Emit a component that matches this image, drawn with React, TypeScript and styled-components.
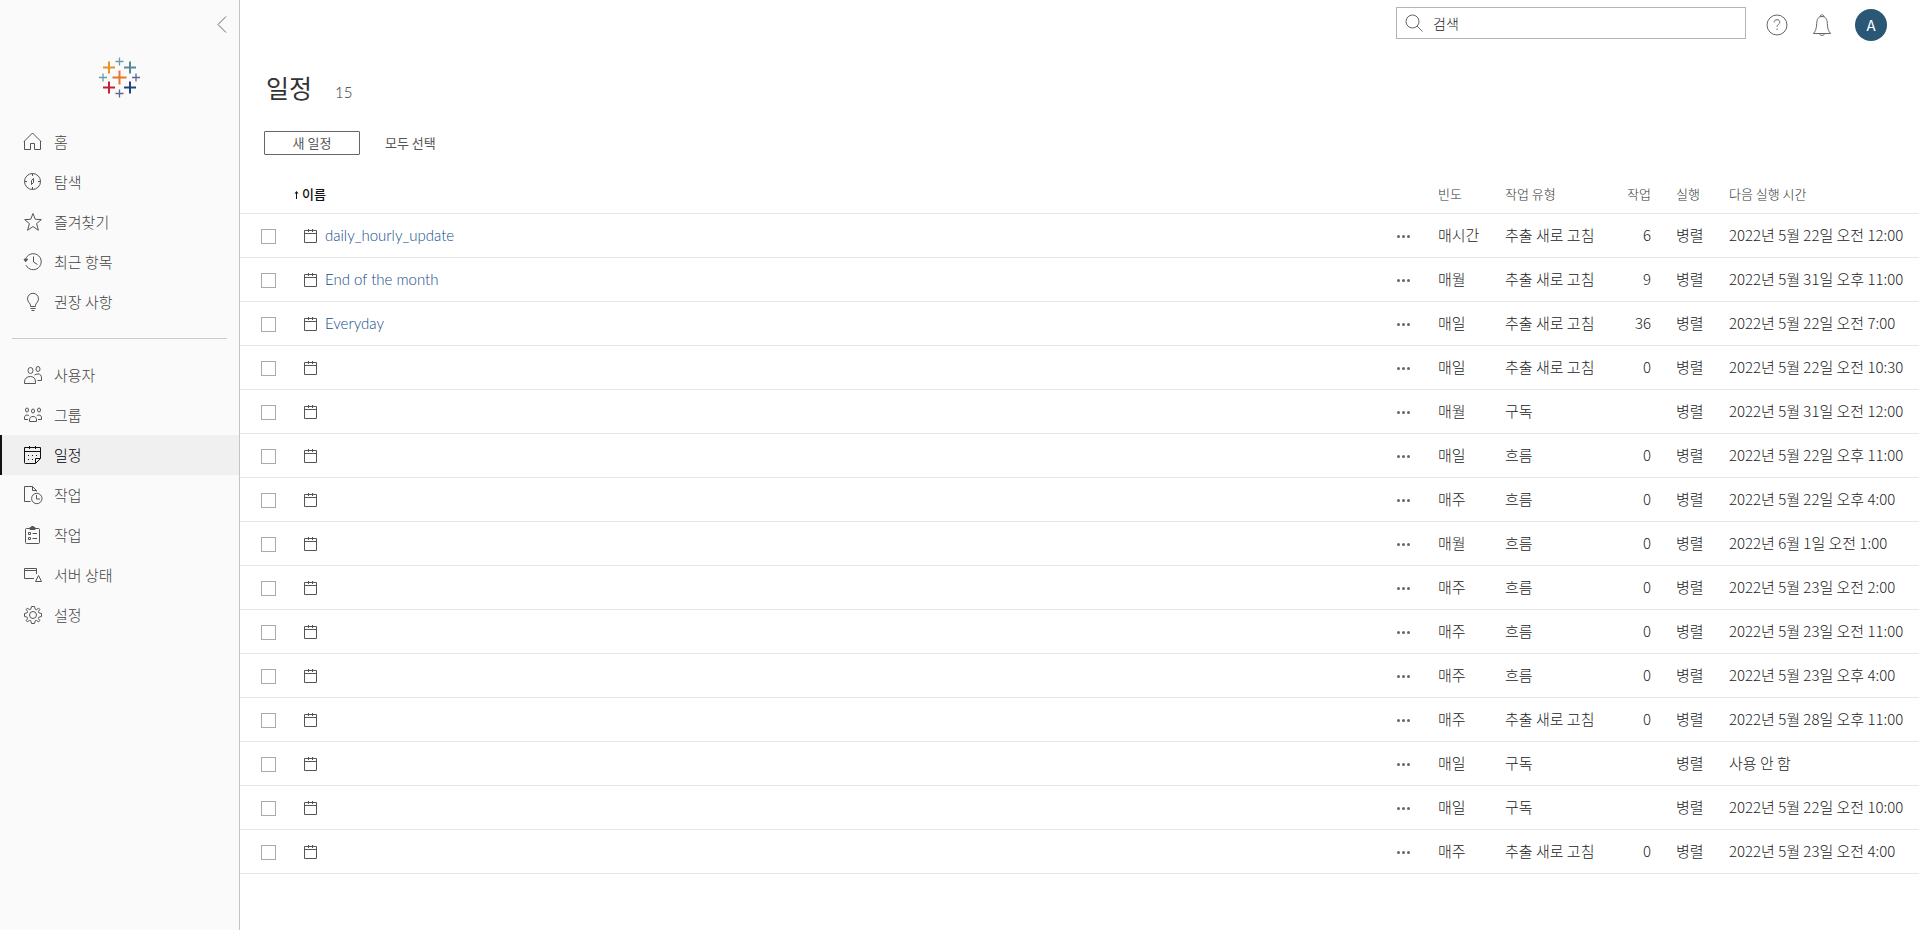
import React from "react";
import styled, { createGlobalStyle } from "styled-components";

const GlobalStyle = createGlobalStyle`
  *, *::before, *::after { box-sizing: border-box; }
  body {
    margin: 0;
    background: #fff;
    color: #222;
    font-family: "Noto Sans CJK KR", sans-serif;
    font-size: 15px;
    line-height: 20px;
  }
  button, input { font: inherit; color: inherit; }
`;

const Page = styled.div`
  display: grid;
  grid-template-columns: 240px minmax(0, 1fr);
  min-height: 100vh;
`;

const Sidebar = styled.aside`
  display: flex;
  flex-direction: column;
  background: #fafafa;
  border-right: 1px solid #c4c4c4;
`;

const SidebarTop = styled.div`
  display: flex;
  justify-content: flex-end;
  padding: 12px 8px 0 0;
`;

const IconButton = styled.button`
  display: grid;
  place-items: center;
  padding: 0;
  border: 0;
  background: none;
  color: #666;
  cursor: pointer;
`;

const CollapseButton = styled(IconButton)`
  width: 18px;
  height: 24px;
`;

const LogoLink = styled.a`
  align-self: center;
  display: block;
  height: 42px;
  margin: 21px 0 23px;
`;

const NavList = styled.ul`
  list-style: none;
  margin: 0;
  padding: 0;
`;

const NavLink = styled.a<{ $active?: boolean }>`
  display: flex;
  align-items: center;
  gap: 11px;
  height: 40px;
  padding-left: 21px;
  border-left: 2px solid ${(p) => (p.$active ? "#111" : "transparent")};
  background: ${(p) => (p.$active ? "#f0f0f0" : "transparent")};
  color: ${(p) => (p.$active ? "#000" : "#444")};
  font-weight: 300;
  font-size: 15px;
  text-decoration: none;
`;

const NavIcon = styled.span<{ $active?: boolean }>`
  display: flex;
  color: ${(p) => (p.$active ? "#111" : "#555")};
`;

const Divider = styled.hr`
  width: auto;
  height: 1px;
  margin: 16px 12px;
  border: 0;
  background: #ccc;
`;

const Main = styled.main`
  display: flex;
  flex-direction: column;
  min-width: 0;
`;

const TopBar = styled.header`
  display: flex;
  align-items: center;
  justify-content: flex-end;
  height: 50px;
  padding-right: 32px;
`;

const SearchBox = styled.label`
  display: flex;
  align-items: center;
  gap: 10px;
  width: 350px;
  height: 32px;
  margin: 0 20px 4px 0;
  padding-left: 8px;
  border: 1px solid #b4b4b4;
  color: #666;
`;

const SearchInput = styled.input`
  flex: 1;
  min-width: 0;
  height: 28px;
  padding: 0;
  border: 0;
  outline: 0;
  background: none;
  font-size: 14px;
  font-weight: 300;
  &::placeholder { color: #222; opacity: 1; }
`;

const TopActions = styled.div`
  display: flex;
  align-items: center;
  gap: 23px;
`;

const BellButton = styled(IconButton)`
  width: 21px;
`;

const Avatar = styled.button`
  width: 32px;
  height: 32px;
  padding: 0;
  border: 0;
  border-radius: 50%;
  background: #2a5775;
  color: #fff;
  font-size: 15px;
  cursor: pointer;
`;

const Heading = styled.div`
  display: flex;
  align-items: baseline;
  gap: 23px;
  padding: 19px 0 0 26px;
`;

const Title = styled.h1`
  margin: 0;
  color: #333;
  font-size: 25px;
  font-weight: 400;
  line-height: 36px;
`;

const Count = styled.span`
  color: #333;
  font-family: Lato, sans-serif;
  font-size: 15px;
  font-weight: 300;
`;

const Actions = styled.div`
  display: flex;
  align-items: center;
  gap: 25px;
  padding: 26px 0 0 24px;
`;

const ActionButton = styled.button<{ $outlined?: boolean }>`
  height: 24px;
  width: ${(p) => (p.$outlined ? "96px" : "auto")};
  padding: 0;
  border: ${(p) => (p.$outlined ? "1px solid #666" : "0")};
  border-radius: 1px;
  background: none;
  color: #555;
  font-size: 13px;
  font-weight: 400;
  line-height: 20px;
  cursor: pointer;
`;

const Table = styled.table`
  width: 100%;
  margin-top: 20px;
  border-collapse: separate;
  border-spacing: 0;
  table-layout: fixed;
`;

const Col = styled.col<{ $width?: number }>`
  width: ${(p) => (p.$width ? `${p.$width}px` : "auto")};
`;

const HeadCell = styled.th<{ $right?: boolean }>`
  height: 39px;
  padding: ${(p) => (p.$right ? "0 11px 0 0" : "0 0 0 14px")};
  border-bottom: 1px solid #e6e6e6;
  color: #333;
  font-size: 13px;
  font-weight: 300;
  text-align: ${(p) => (p.$right ? "right" : "left")};
  white-space: nowrap;
`;

const SortHeadCell = styled(HeadCell)`
  padding-left: 1px;
`;

const SortButton = styled.button`
  display: flex;
  align-items: center;
  gap: 3px;
  padding: 0;
  border: 0;
  background: none;
  color: #111;
  font-weight: 500;
  cursor: pointer;
`;

const Cell = styled.td<{ $right?: boolean }>`
  height: 44px;
  padding: ${(p) => (p.$right ? "0 11px 2px 0" : "0 0 2px 14px")};
  border-bottom: 1px solid #e6e6e6;
  font-weight: 300;
  text-align: ${(p) => (p.$right ? "right" : "left")};
  white-space: nowrap;
`;

const CheckCell = styled(Cell)`
  padding: 0 0 0 21px;
`;

const NameCell = styled(Cell)`
  padding: 0 0 0 11px;
`;

const MenuCell = styled(Cell)`
  padding: 1px 0 0;
`;

const Checkbox = styled.input`
  appearance: none;
  display: block;
  width: 15px;
  height: 15px;
  margin: 2px 0 0;
  border: 1px solid #aaa;
  background: #fff;
  &:checked { background: #2a5775; }
`;

const NameLine = styled.div`
  display: flex;
  align-items: center;
  gap: 8px;
  color: #555;
`;

const NameLink = styled.a`
  padding-bottom: 2px;
  color: #0f4c8c;
  font-family: Lato, sans-serif;
  font-weight: 300;
  text-decoration: none;
`;

const MenuButton = styled(IconButton)`
  width: 39px;
  height: 24px;
`;

type IconProps = { size?: number; h?: number; children: React.ReactNode };

const Icon = ({ size = 20, h, children }: IconProps) => (
  <svg
    width={size}
    height={h ?? size}
    viewBox={`0 0 ${size} ${h ?? size}`}
    fill="none"
    stroke="currentColor"
    strokeWidth="1"
    aria-hidden="true"
  >
    {children}
  </svg>
);

const icons = {
  home: (
    <Icon>
      <path d="M1 9.5L9.5 1L18 9.5M1.5 9V17.5H7.5V11.5H11.5V17.5H17.5V9" />
    </Icon>
  ),
  explore: (
    <Icon>
      <circle cx="9.5" cy="9.5" r="8" />
      <path d="M9.5 1.5V4M9.5 15V17.5M1.5 9.5H4M15 9.5H17.5M8.5 8.5L10.5 6.5V10.5L8.5 12.5Z" />
    </Icon>
  ),
  star: (
    <Icon>
      <path d="M10 1.5L12.3 7.3L18.3 7.6L13.6 11.6L15.4 18.3L10 14.5L4.6 18.3L6.4 11.6L1.7 7.6L7.7 7.3Z" />
    </Icon>
  ),
  recent: (
    <Icon>
      <path d="M2.5 7.5A8 8 0 1 1 3 13.2M10.5 4.5V10L14.5 12.5" />
      <path d="M1 7.2H4.8L2.6 9.8Z" fill="currentColor" />
    </Icon>
  ),
  bulb: (
    <Icon>
      <path d="M7.5 14.5V13.2C7.5 11.5 4.5 10 4.5 6.8A5.5 5.5 0 0 1 15.5 6.8C15.5 10 12.5 11.5 12.5 13.2V14.5ZM7.5 16.5H12.5M8.5 18.5H11.5" />
    </Icon>
  ),
  users: (
    <Icon>
      <ellipse cx="7.5" cy="5.5" rx="2.5" ry="3" />
      <ellipse cx="15" cy="4" rx="2" ry="2.5" />
      <path d="M1.5 18.5V17C1.5 13.5 4 11.5 7.3 11.5S12.5 13.5 12.5 17V18.5ZM11.5 10C12.5 9.3 13.6 9 15 9C17.5 9 18.5 10.5 18.5 13V15.5H14.5" />
    </Icon>
  ),
  groups: (
    <Icon>
      <ellipse cx="4" cy="5" rx="1.5" ry="2" />
      <ellipse cx="10" cy="6" rx="1.5" ry="2" />
      <ellipse cx="16" cy="5" rx="1.5" ry="2" />
      <path d="M6.5 16.5V15C6.5 12.5 8 11.5 10 11.5S13.5 12.5 13.5 15V16.5ZM5 14.5H1.5V13C1.5 11 2.5 10 4 10C5 10 5.7 10.3 6.2 11M15 14.5H18.5V13C18.5 11 17.5 10 16 10C15 10 14.3 10.3 13.8 11" />
    </Icon>
  ),
  schedule: (
    <Icon>
      <path d="M12.5 18.5H2.5A1 1 0 0 1 1.5 17.5V2.5H17.5V13.5L12.5 18.5V13.5H17.5M1.5 6.5H17.5M6.5 1V4M12.5 1V4" />
      <path d="M5 10.5H6M9 10.5H10M13 10.5H14M5 14.5H6M9 14.5H10" />
    </Icon>
  ),
  jobs: (
    <Icon>
      <path d="M7.5 16.5H1.5V1.5H9.5L13.5 5.5V6.5M9.5 1.5V5.5H13.5" />
      <circle cx="13.8" cy="13.5" r="5.2" />
      <path d="M13.5 10V14H17" />
    </Icon>
  ),
  tasks: (
    <Icon>
      <rect x="2.5" y="3.5" width="14" height="15" rx="1" />
      <path d="M7 2.5H8.5V1.5H10.5V2.5H12V4.5H7Z" fill="currentColor" />
      <path d="M5.5 7.5H7.5V9.5H5.5ZM5.5 12.5H7.5V14.5H5.5ZM9.5 8.5H14M9.5 13.5H14" />
    </Icon>
  ),
  server: (
    <Icon>
      <path d="M11 13.5H1.5V3.5H13.5V9M1.5 5.5H13.5M15.5 10.5L18.5 16.5H12.5Z" />
    </Icon>
  ),
  settings: (
    <Icon>
      <circle cx="10" cy="10" r="3.5" />
      <path d="M8.5 1.5H11.5L12.2 4.2L13.3 4.7L15.7 3.2L16.8 4.3L15.4 6.7L15.8 7.8L18.5 8.5V11.5L15.8 12.2L15.4 13.3L16.8 15.7L15.7 16.8L13.3 15.4L12.2 15.8L11.5 18.5H8.5L7.8 15.8L6.7 15.4L4.3 16.8L3.2 15.7L4.6 13.3L4.2 12.2L1.5 11.5V8.5L4.2 7.8L4.6 6.7L3.2 4.3L4.3 3.2L6.7 4.6L7.8 4.2Z" />
    </Icon>
  ),
};

// x, y, arm length, stroke width, colour
const CROSSES: [number, number, number, number, string][] = [
  [20.5, 20.5, 7, 2, "#e8762c"],
  [10, 10.5, 6, 2, "#eb9129"],
  [31, 10.5, 6, 2, "#5b879b"],
  [10, 30.5, 6, 2, "#c72035"],
  [31, 30.5, 6, 2, "#1f457e"],
  [20.5, 4.5, 4, 1.3, "#7099a6"],
  [4, 20.5, 4, 1.3, "#7099a6"],
  [37, 20.5, 4, 1.3, "#5c6692"],
  [20.5, 36.5, 4, 1.3, "#5c6692"],
];

const Logo = () => (
  <svg width="42" height="42" viewBox="0 0 42 42" aria-label="Tableau" role="img">
    {CROSSES.map(([x, y, r, w, color], i) => (
      <path key={i} d={`M${x - r} ${y}H${x + r}M${x} ${y - r}V${y + r}`} stroke={color} strokeWidth={w} />
    ))}
  </svg>
);

const CalendarIcon = () => (
  <Icon size={13} h={14}>
    <path d="M0.5 1.5H12.5V13.5H0.5ZM0.5 4.5H12.5M4.5 0V3M8.5 0V3" />
  </Icon>
);

type NavItem = { label: string; icon: keyof typeof icons; active?: boolean };

const PRIMARY: NavItem[] = [
  { label: "홈", icon: "home" },
  { label: "탐색", icon: "explore" },
  { label: "즐겨찾기", icon: "star" },
  { label: "최근 항목", icon: "recent" },
  { label: "권장 사항", icon: "bulb" },
];

const ADMIN: NavItem[] = [
  { label: "사용자", icon: "users" },
  { label: "그룹", icon: "groups" },
  { label: "일정", icon: "schedule", active: true },
  { label: "작업", icon: "jobs" },
  { label: "작업", icon: "tasks" },
  { label: "서버 상태", icon: "server" },
  { label: "설정", icon: "settings" },
];

const Nav = ({ items }: { items: NavItem[] }) => (
  <NavList>
    {items.map((item) => (
      <li key={item.icon}>
        <NavLink href="#" $active={item.active} aria-current={item.active ? "page" : undefined}>
          <NavIcon $active={item.active}>{icons[item.icon]}</NavIcon>
          {item.label}
        </NavLink>
      </li>
    ))}
  </NavList>
);

const EXTRACT = "추출 새로 고침";
const SUBSCRIPTION = "구독";
const FLOW = "흐름";

// name, frequency, task type, task count, next run
const SCHEDULES: [string, string, string, string, string][] = [
  ["daily_hourly_update", "매시간", EXTRACT, "6", "2022년 5월 22일 오전 12:00"],
  ["End of the month", "매월", EXTRACT, "9", "2022년 5월 31일 오후 11:00"],
  ["Everyday", "매일", EXTRACT, "36", "2022년 5월 22일 오전 7:00"],
  ["", "매일", EXTRACT, "0", "2022년 5월 22일 오전 10:30"],
  ["", "매월", SUBSCRIPTION, "", "2022년 5월 31일 오전 12:00"],
  ["", "매일", FLOW, "0", "2022년 5월 22일 오후 11:00"],
  ["", "매주", FLOW, "0", "2022년 5월 22일 오후 4:00"],
  ["", "매월", FLOW, "0", "2022년 6월 1일 오전 1:00"],
  ["", "매주", FLOW, "0", "2022년 5월 23일 오전 2:00"],
  ["", "매주", FLOW, "0", "2022년 5월 23일 오전 11:00"],
  ["", "매주", FLOW, "0", "2022년 5월 23일 오후 4:00"],
  ["", "매주", EXTRACT, "0", "2022년 5월 28일 오후 11:00"],
  ["", "매일", SUBSCRIPTION, "", "사용 안 함"],
  ["", "매일", SUBSCRIPTION, "", "2022년 5월 22일 오전 10:00"],
  ["", "매주", EXTRACT, "0", "2022년 5월 23일 오전 4:00"],
];

export default function App() {
  return (
    <Page>
      <GlobalStyle />
      <Sidebar>
        <SidebarTop>
          <CollapseButton type="button" aria-label="사이드바 접기">
            <Icon size={10} h={17}>
              <path d="M9 0.5L1 8.5L9 16.5" />
            </Icon>
          </CollapseButton>
        </SidebarTop>
        <LogoLink href="#">
          <Logo />
        </LogoLink>
        <nav>
          <Nav items={PRIMARY} />
          <Divider />
          <Nav items={ADMIN} />
        </nav>
      </Sidebar>
      <Main>
        <TopBar>
          <SearchBox>
            <Icon size={18}>
              <circle cx="7.5" cy="7.5" r="6.5" />
              <path d="M12 12L17.5 17.5" />
            </Icon>
            <SearchInput type="search" placeholder="검색" aria-label="검색" />
          </SearchBox>
          <TopActions>
            <IconButton type="button" aria-label="도움말">
              <Icon size={22}>
                <circle cx="11" cy="11" r="10" />
                <path d="M8.2 8.4C8.2 6.6 9.4 5.7 11 5.7S13.8 6.7 13.8 8.2C13.8 10.2 11 10.4 11 12.8M11 14.6V16" />
              </Icon>
            </IconButton>
            <BellButton type="button" aria-label="알림">
              <Icon size={20} h={22}>
                <path d="M1.5 19.5C3.5 17 4.5 14.5 4.7 9.5C4.8 5 6.5 2.5 10 2.5S15.2 5 15.3 9.5C15.5 14.5 16.5 17 18.5 19.5ZM8 2.8C8 0.2 12 0.2 12 2.8M7.5 19.8C7.8 21.9 12.2 21.9 12.5 19.8" />
              </Icon>
            </BellButton>
            <Avatar type="button">A</Avatar>
          </TopActions>
        </TopBar>
        <Heading>
          <Title>일정</Title>
          <Count>15</Count>
        </Heading>
        <Actions>
          <ActionButton type="button" $outlined>새 일정</ActionButton>
          <ActionButton type="button">모두 선택</ActionButton>
        </Actions>
        <Table>
          <colgroup>
            <Col $width={53} />
            <Col />
            <Col $width={40} />
            <Col $width={67} />
            <Col $width={120} />
            <Col $width={51} />
            <Col $width={53} />
            <Col $width={204} />
          </colgroup>
          <thead>
            <tr>
              <HeadCell />
              <SortHeadCell aria-sort="ascending">
                <SortButton type="button">
                  <Icon size={5} h={9}>
                    <path d="M2.5 2V9" />
                    <path d="M0.5 3.5H4.5L2.5 1Z" fill="currentColor" stroke="none" />
                  </Icon>
                  이름
                </SortButton>
              </SortHeadCell>
              <HeadCell />
              <HeadCell>빈도</HeadCell>
              <HeadCell>작업 유형</HeadCell>
              <HeadCell $right>작업</HeadCell>
              <HeadCell>실행</HeadCell>
              <HeadCell>다음 실행 시간</HeadCell>
            </tr>
          </thead>
          <tbody>
            {SCHEDULES.map(([name, frequency, type, tasks, next], i) => (
              <tr key={i}>
                <CheckCell>
                  <Checkbox type="checkbox" aria-label={`${name || "일정"} 선택`} />
                </CheckCell>
                <NameCell>
                  <NameLine>
                    <CalendarIcon />
                    {name && <NameLink href="#">{name}</NameLink>}
                  </NameLine>
                </NameCell>
                <MenuCell>
                  <MenuButton type="button" aria-label="작업 메뉴">
                    <Icon size={13} h={3}>
                      <g fill="currentColor" stroke="none">
                        <circle cx="1.5" cy="1.5" r="1.5" />
                        <circle cx="6.5" cy="1.5" r="1.5" />
                        <circle cx="11.5" cy="1.5" r="1.5" />
                      </g>
                    </Icon>
                  </MenuButton>
                </MenuCell>
                <Cell>{frequency}</Cell>
                <Cell>{type}</Cell>
                <Cell $right>{tasks}</Cell>
                <Cell>병렬</Cell>
                <Cell>{next}</Cell>
              </tr>
            ))}
          </tbody>
        </Table>
      </Main>
    </Page>
  );
}
